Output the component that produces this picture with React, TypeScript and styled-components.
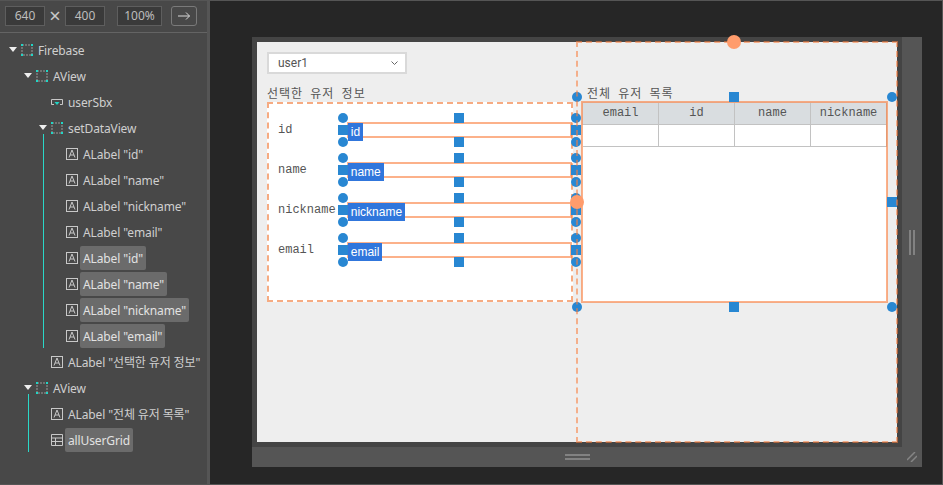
import React from 'react';
import styled, {createGlobalStyle} from 'styled-components';

type IconKind = 'view' | 'label' | 'selectbox' | 'grid';

type TreeNode = {
    text: string,
    icon: IconKind,
    selected?: boolean,
    line?: boolean,
    children?: TreeNode[],
}

const tree: TreeNode[] = [
    {
        text: 'Firebase', icon: 'view', children: [
            {
                text: 'AView', icon: 'view', children: [
                    {text: 'userSbx', icon: 'selectbox'},
                    {
                        text: 'setDataView', icon: 'view', line: true, children: [
                            {text: 'ALabel "id"', icon: 'label'},
                            {text: 'ALabel "name"', icon: 'label'},
                            {text: 'ALabel "nickname"', icon: 'label'},
                            {text: 'ALabel "email"', icon: 'label'},
                            {text: 'ALabel "id"', icon: 'label', selected: true},
                            {text: 'ALabel "name"', icon: 'label', selected: true},
                            {text: 'ALabel "nickname"', icon: 'label', selected: true},
                            {text: 'ALabel "email"', icon: 'label', selected: true},
                        ]
                    },
                    {text: 'ALabel "선택한 유저 정보"', icon: 'label'},
                ]
            },
            {
                text: 'AView', icon: 'view', line: true, children: [
                    {text: 'ALabel "전체 유저 목록"', icon: 'label'},
                    {text: 'allUserGrid', icon: 'grid', selected: true},
                ]
            },
        ]
    },
];

const fields = ['id', 'name', 'nickname', 'email'];
const columns = ['email', 'id', 'name', 'nickname'];

const TreeIcon = ({kind}: { kind: IconKind }) => {
    if (kind === 'view') {
        return (
            <IconSvg viewBox="0 0 12 12">
                <rect x="1" y="1" width="10" height="10" fill="none" stroke="#9a9a9a" strokeDasharray="2 1"/>
                <path d="M0 0h2v2H0zM10 0h2v2h-2zM0 10h2v2H0zM10 10h2v2h-2z" fill="#21d6c6"/>
            </IconSvg>
        );
    }
    if (kind === 'label') {
        return (
            <IconSvg viewBox="0 0 12 12">
                <rect x="0.5" y="0.5" width="11" height="11" fill="none" stroke="#c8c8c8"/>
                <path d="M3 9.5 6 2l3 7.5M4 7h4" fill="none" stroke="#c8c8c8"/>
            </IconSvg>
        );
    }
    if (kind === 'selectbox') {
        return (
            <IconSvg viewBox="0 0 12 12">
                <path d="M3 8.5H.5v-5h11v5H9" fill="none" stroke="#c8c8c8"/>
                <path d="M3.5 6h5L6 9z" fill="#21d6c6"/>
            </IconSvg>
        );
    }
    return (
        <IconSvg viewBox="0 0 12 12">
            <path d="M.5.5h11v11H.5zM.5 4h11M.5 7.5h11M4.5 4v7.5" fill="none" stroke="#c8c8c8"/>
        </IconSvg>
    );
};

const TreeBranch = ({node, depth}: { node: TreeNode, depth: number }) => (
    <>
        <TreeRow $depth={depth}>
            {node.children && <Toggle $depth={depth}/>}
            <TreeIcon kind={node.icon}/>
            <TreeText $selected={node.selected}>{node.text}</TreeText>
        </TreeRow>
        {node.children && (
            <TreeGroup $depth={depth} $line={node.line}>
                {node.children.map((child, i) => <TreeBranch key={i} node={child} depth={depth + 1}/>)}
            </TreeGroup>
        )}
    </>
);

const Handles = () => (
    <>
        <Handle $h="start" $v="start" $round/>
        <Handle $h="mid" $v="start"/>
        <Handle $h="end" $v="start" $round/>
        <Handle $h="start" $v="mid"/>
        <Handle $h="end" $v="mid"/>
        <Handle $h="start" $v="end" $round/>
        <Handle $h="mid" $v="end"/>
        <Handle $h="end" $v="end" $round/>
    </>
);

export default function App() {
    return (
        <>
            <GlobalStyle/>
            <Shell>
                <Sidebar>
                    <SizeBar>
                        <SizeField $width={40}>640</SizeField>
                        <Times>×</Times>
                        <SizeField $width={40}>400</SizeField>
                        <SizeField $width={45} $gap={12}>100%</SizeField>
                        <ArrowButton>
                            <svg width="14" height="10" viewBox="0 0 14 10">
                                <path d="M1 5h11.5M9 1.5 12.5 5 9 8.5" fill="none" stroke="#d8d8d8"/>
                            </svg>
                        </ArrowButton>
                    </SizeBar>
                    <Tree>
                        {tree.map((node, i) => <TreeBranch key={i} node={node} depth={0}/>)}
                    </Tree>
                </Sidebar>
                <Workspace>
                    <Frame>
                        <Stage>
                            <Page>
                                <LeftView>
                                    <SelectBox>
                                        user1
                                        <svg width="7" height="5" viewBox="0 0 7 5">
                                            <path d="M.5.5 3.5 3.5 6.5.5" fill="none" stroke="#666"/>
                                        </svg>
                                    </SelectBox>
                                    <Title>선택한 유저 정보</Title>
                                    <DataView>
                                        {fields.map(field => (
                                            <FieldRow key={field}>
                                                <FieldName>{field}</FieldName>
                                                <FieldBox>
                                                    <Chip>{field}</Chip>
                                                    <Handles/>
                                                </FieldBox>
                                            </FieldRow>
                                        ))}
                                    </DataView>
                                </LeftView>
                                <RightView>
                                    <Title>전체 유저 목록</Title>
                                    <GridBox>
                                        <GridRow $head>
                                            {columns.map(col => <GridCell key={col}>{col}</GridCell>)}
                                        </GridRow>
                                        <GridRow>
                                            {columns.map(col => <GridCell key={col}/>)}
                                        </GridRow>
                                        <Handles/>
                                    </GridBox>
                                    <DashedFrame>
                                        <TopDot/>
                                        <LeftDot/>
                                    </DashedFrame>
                                </RightView>
                            </Page>
                        </Stage>
                        <SidePanel>
                            <VerticalGrip/>
                        </SidePanel>
                        <BottomPanel>
                            <HorizontalGrip/>
                            <ResizeCorner width="10" height="10" viewBox="0 0 10 10">
                                <path d="M0 8 8 0M4 10l6-6" stroke="#858585" strokeWidth="1.5" fill="none"/>
                            </ResizeCorner>
                        </BottomPanel>
                    </Frame>
                </Workspace>
            </Shell>
        </>
    );
}

const GlobalStyle = createGlobalStyle`
  html, body {
    margin: 0;
    padding: 0;
    background: #262626;
  }

  * {
    box-sizing: border-box;
  }
`

const Shell = styled.div`
  width: 943px;
  height: 485px;
  display: flex;
  border-top: 1px solid #555;
  border-right: 1px solid #555;
  border-bottom: 1px solid #555;
  overflow: hidden;
  font-family: "Noto Sans", "Noto Sans CJK KR", sans-serif;
  font-size: 12px;
`

const Sidebar = styled.div`
  width: 210px;
  flex: none;
  background: #484848;
  border-right: 3px solid #555;
`

const SizeBar = styled.div`
  height: 32px;
  display: flex;
  align-items: center;
  padding: 0 0 2px 5px;
  border-bottom: 1px solid #646464;
`

const SizeField = styled.div<{ $width: number, $gap?: number }>`
  width: ${props => props.$width}px;
  height: 20px;
  margin-left: ${props => props.$gap || 0}px;
  display: flex;
  align-items: center;
  justify-content: center;
  background: #3a3a3a;
  border: 1px solid #5e5e5e;
  color: #bdbdbd;
`

const Times = styled.span`
  width: 20px;
  text-align: center;
  color: #c8c8c8;
  font-size: 20px;
  line-height: 20px;
`

const ArrowButton = styled.div`
  width: 26px;
  height: 20px;
  margin-left: 9px;
  display: flex;
  align-items: center;
  justify-content: center;
  border: 1px solid #7a7a7a;
  border-radius: 3px;
`

const Tree = styled.div`
  padding-top: 4px;
`

const TreeRow = styled.div<{ $depth: number }>`
  position: relative;
  height: 26px;
  display: flex;
  align-items: center;
  padding-left: ${props => 21 + props.$depth * 15}px;
`

const Toggle = styled.span<{ $depth: number }>`
  position: absolute;
  left: ${props => 9 + props.$depth * 15}px;
  top: 10px;
  border-left: 4px solid transparent;
  border-right: 4px solid transparent;
  border-top: 5px solid #eee;
`

const IconSvg = styled.svg`
  width: 12px;
  height: 12px;
  flex: none;
  display: block;
`

const TreeText = styled.span<{ $selected?: boolean }>`
  height: 24px;
  margin-left: 2px;
  padding: 0 3px;
  display: flex;
  align-items: center;
  white-space: nowrap;
  letter-spacing: -0.12px;
  border-radius: 2px;
  color: ${props => props.$selected ? '#e2e2e2' : '#cfcfcf'};
  background: ${props => props.$selected ? '#6b6b6b' : 'transparent'};
`

const TreeGroup = styled.div<{ $depth: number, $line?: boolean }>`
  position: relative;

  &::before {
    content: '';
    display: ${props => props.$line ? 'block' : 'none'};
    position: absolute;
    left: ${props => 13 + props.$depth * 15}px;
    top: -7px;
    bottom: 1px;
    width: 1px;
    background: #2ad8c8;
  }
`

const Workspace = styled.div`
  flex: 1;
  padding: 36px 0 0 42px;
`

const Frame = styled.div`
  width: 670px;
  height: 430px;
  display: grid;
  grid-template-columns: 650px 20px;
  grid-template-rows: 410px 20px;
`

const Stage = styled.div`
  padding: 5px;
  background: #444;
`

const SidePanel = styled.div`
  display: flex;
  align-items: center;
  justify-content: center;
  background: #555;
`

const VerticalGrip = styled.div`
  width: 6px;
  height: 25px;
  border-left: 2px solid #828282;
  border-right: 2px solid #828282;
`

const BottomPanel = styled.div`
  grid-column: 1 / 3;
  position: relative;
  display: flex;
  align-items: center;
  justify-content: center;
  background: #555;
`

const HorizontalGrip = styled.div`
  width: 25px;
  height: 6px;
  margin-left: -19px;
  border-top: 2px solid #828282;
  border-bottom: 2px solid #828282;
`

const ResizeCorner = styled.svg`
  position: absolute;
  right: 5px;
  bottom: 5px;
`

const Page = styled.div`
  width: 640px;
  height: 400px;
  display: flex;
  background: #eee;
`

const LeftView = styled.div`
  width: 320px;
  padding: 10px 0 0 10px;
`

const SelectBox = styled.div`
  width: 140px;
  height: 22px;
  display: flex;
  align-items: center;
  justify-content: space-between;
  padding: 0 7px 0 9px;
  background: #fff;
  border: 2px solid #d9d9d9;
  color: #555;
  font-family: Roboto, sans-serif;
`

const Title = styled.div`
  height: 17px;
  margin-top: 11px;
  line-height: 21px;
  letter-spacing: 1px;
  word-spacing: -1px;
  color: #555;
  font-family: "Liberation Mono", "Noto Sans CJK KR", monospace;
`

const DataView = styled.div`
  width: 306px;
  height: 200px;
  padding-top: 19px;
  display: flex;
  flex-direction: column;
  gap: 26px;
  background: #fff;
  border: 2px dashed #f6ab82;
`

const FieldRow = styled.div`
  height: 14px;
  display: flex;
  padding-left: 9px;
`

const FieldName = styled.div`
  width: 70px;
  line-height: 14px;
  color: #555;
  font-family: "Liberation Mono", monospace;
`

const FieldBox = styled.div`
  position: relative;
  width: 224px;
  height: 14px;
  outline: 2px solid rgba(250, 125, 60, 0.6);
  outline-offset: -1px;
`

const Chip = styled.span`
  position: absolute;
  left: 0;
  top: 0;
  z-index: 1;
  height: 18px;
  padding: 0 3px;
  line-height: 18px;
  color: #fff;
  background: #3076dc;
  font-family: "Liberation Sans", sans-serif;
`

const handlePosition = {
    start: '-10px',
    mid: 'calc(50% - 5.5px)',
    end: '100%',
}

const Handle = styled.span<{ $h: 'start' | 'mid' | 'end', $v: 'start' | 'mid' | 'end', $round?: boolean }>`
  position: absolute;
  z-index: 1;
  left: ${props => handlePosition[props.$h]};
  top: ${props => handlePosition[props.$v]};
  width: 10px;
  height: 10px;
  background: #2887d2;
  border-radius: ${props => props.$round ? '50%' : '0'};
`

const RightView = styled.div`
  position: relative;
  width: 320px;
  padding: 32px 0 0 10px;
`

const GridBox = styled.div`
  position: relative;
  width: 305px;
  height: 200px;
  margin-left: -5px;
  background: #fff;
  outline: 2px solid rgba(250, 125, 60, 0.6);
  outline-offset: -1px;
`

const GridRow = styled.div<{ $head?: boolean }>`
  height: ${props => props.$head ? '23px' : '22px'};
  padding-top: ${props => props.$head ? '1px' : '0'};
  padding-left: 1px;
  display: grid;
  grid-template-columns: 76px 76px 76px 76px;
  background: ${props => props.$head ? '#d9dde0' : 'transparent'};
  color: #555;
  font-family: "Liberation Mono", monospace;
`

const GridCell = styled.div`
  line-height: 20px;
  text-align: center;
  border-right: 1px solid #c2c2c2;
  border-bottom: 1px solid #c2c2c2;
`

const DashedFrame = styled.div`
  position: absolute;
  z-index: 2;
  left: -1px;
  top: -1px;
  right: -1px;
  bottom: -1px;
  border: 2px dashed rgba(250, 125, 60, 0.55);
`

const TopDot = styled.span`
  position: absolute;
  left: 149px;
  top: -8px;
  width: 14px;
  height: 14px;
  border-radius: 50%;
  background: #ff9c6c;
`

const LeftDot = styled.span`
  position: absolute;
  left: -8px;
  top: 152px;
  width: 14px;
  height: 14px;
  border-radius: 50%;
  background: #ff9c6c;
`
